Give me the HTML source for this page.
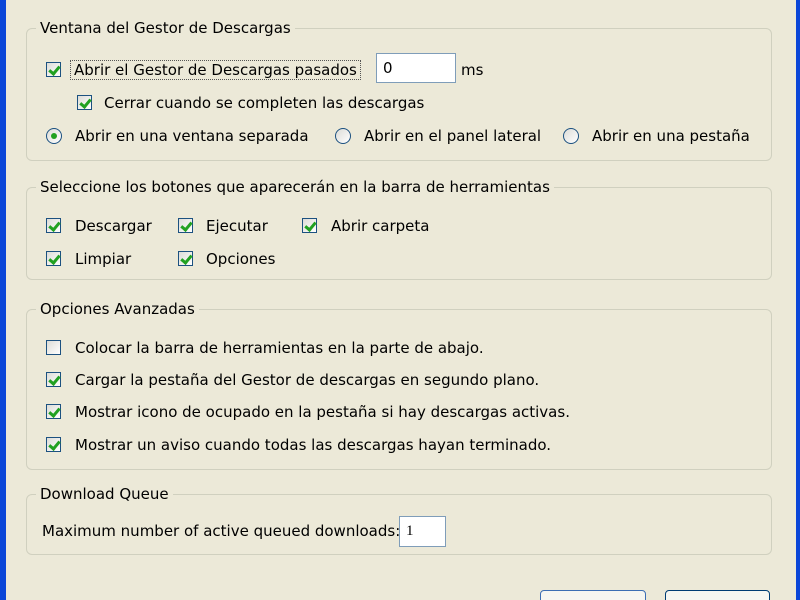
<html style="overflow:hidden;height:600px"><head><style>
body{margin:0;width:800px;height:600px;background:#ECE9D8;position:relative;overflow:hidden;font-family:"DejaVu Sans","Liberation Sans",sans-serif;font-size:15px;color:#000}
.a{position:absolute;white-space:nowrap}
.g{position:absolute;border:1px solid #D0D0BF;border-radius:6px}
.l{position:absolute;background:#ECE9D8;padding:0 4px;line-height:18px;white-space:nowrap}
.cb{position:absolute;width:15px;height:15px;border:1px solid #1C5180;background:linear-gradient(135deg,#DCDCD7,#fff);box-sizing:border-box}
.cb.c::after{content:"";position:absolute;left:4px;top:1px;width:4px;height:8px;border:solid #21A121;border-width:0 3px 3px 0;transform:rotate(40deg)}
.rb{position:absolute;width:16px;height:16px;border:1px solid #1C5180;border-radius:50%;background:linear-gradient(135deg,#DCDCD7,#fff);box-sizing:border-box}
.rb.c::after{content:"";position:absolute;left:4px;top:4px;width:6px;height:6px;border-radius:50%;background:#21A121}
.t{position:absolute;line-height:18px;white-space:nowrap}
.in{position:absolute;background:#fff;border:1px solid #7F9DB9;box-sizing:border-box;padding-left:6px;line-height:28px}
.btn{position:absolute;border:1px solid #003C74;border-radius:4px;background:#F6F6F1;box-sizing:border-box}
</style></head><body>
<div class="a" style="left:0;top:0;width:6px;height:600px;background:#0A46D8"></div>
<div class="a" style="left:796px;top:0;width:4px;height:600px;background:#0A46D8"></div>

<div class="g" style="left:26px;top:28px;width:744px;height:131px"></div>
<div class="l" style="left:36px;top:19px">Ventana del Gestor de Descargas</div>
<div class="cb c" style="left:46px;top:62px"></div>
<div class="t" style="left:70px;top:60px;border:1px dotted #555;padding:0 3px">Abrir el Gestor de Descargas pasados</div>
<div class="in" style="left:376px;top:53px;width:80px;height:30px">0</div>
<div class="t" style="left:461px;top:61px">ms</div>
<div class="cb c" style="left:77px;top:95px"></div>
<div class="t" style="left:104px;top:94px">Cerrar cuando se completen las descargas</div>
<div class="rb c" style="left:46px;top:128px"></div>
<div class="t" style="left:75px;top:127px">Abrir en una ventana separada</div>
<div class="rb" style="left:335px;top:128px"></div>
<div class="t" style="left:364px;top:127px">Abrir en el panel lateral</div>
<div class="rb" style="left:563px;top:128px"></div>
<div class="t" style="left:592px;top:127px">Abrir en una pestaña</div>

<div class="g" style="left:26px;top:187px;width:744px;height:91px"></div>
<div class="l" style="left:36px;top:178px">Seleccione los botones que aparecerán en la barra de herramientas</div>
<div class="cb c" style="left:46px;top:218px"></div><div class="t" style="left:75px;top:217px">Descargar</div>
<div class="cb c" style="left:178px;top:218px"></div><div class="t" style="left:206px;top:217px">Ejecutar</div>
<div class="cb c" style="left:302px;top:218px"></div><div class="t" style="left:331px;top:217px">Abrir carpeta</div>
<div class="cb c" style="left:46px;top:251px"></div><div class="t" style="left:75px;top:250px">Limpiar</div>
<div class="cb c" style="left:178px;top:251px"></div><div class="t" style="left:206px;top:250px">Opciones</div>

<div class="g" style="left:26px;top:309px;width:744px;height:159px"></div>
<div class="l" style="left:36px;top:300px">Opciones Avanzadas</div>
<div class="cb" style="left:46px;top:340px"></div><div class="t" style="left:75px;top:339px">Colocar la barra de herramientas en la parte de abajo.</div>
<div class="cb c" style="left:46px;top:372px"></div><div class="t" style="left:75px;top:371px">Cargar la pestaña del Gestor de descargas en segundo plano.</div>
<div class="cb c" style="left:46px;top:404px"></div><div class="t" style="left:75px;top:403px">Mostrar icono de ocupado en la pestaña si hay descargas activas.</div>
<div class="cb c" style="left:46px;top:437px"></div><div class="t" style="left:75px;top:436px">Mostrar un aviso cuando todas las descargas hayan terminado.</div>

<div class="g" style="left:26px;top:494px;width:744px;height:59px"></div>
<div class="l" style="left:36px;top:485px">Download Queue</div>
<div class="t" style="left:42px;top:522px">Maximum number of active queued downloads:</div>
<div class="in" style="left:399px;top:516px;width:47px;height:31px;font-family:'Liberation Serif',serif">1</div>

<div class="btn" style="left:540px;top:590px;width:106px;height:22px;border-color:#3C6EB4"></div>
<div class="btn" style="left:665px;top:590px;width:105px;height:22px"></div>
</body></html>
